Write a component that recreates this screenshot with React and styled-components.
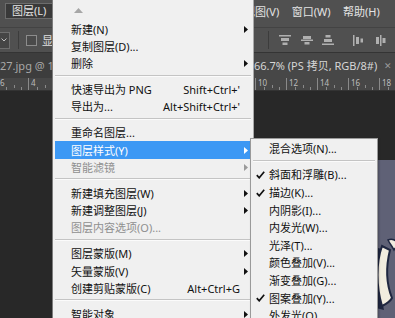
import React from 'react';
import styled, { createGlobalStyle } from 'styled-components';

const FONT = `"Noto Sans", "Noto Sans CJK SC", sans-serif`;

const Global = createGlobalStyle`
  html, body { margin: 0; padding: 0; background: #282828; }
  body { width: 395px; height: 318px; overflow: hidden; font-family: ${FONT}; }
  * { box-sizing: border-box; }
`;

const Screen = styled.div`
  position: relative;
  width: 395px;
  height: 318px;
  overflow: hidden;
  display: flex;
  flex-direction: column;
  background: #282828;
  font-family: ${FONT};
`;

/* width of the window strip left of the open menu */
const LEFT_STRIP = 52;

/* ---------- top menu bar ---------- */
const MenuBar = styled.div`
  flex: none;
  height: 27px;
  display: flex;
  align-items: flex-start;
  padding: 3px 0 0 5px;
  background: #505050;
  color: #e4e4e4;
  font-size: 11px;
`;
const BarButton = styled.div`
  width: 47px;
  height: 16px;
  padding: 0 6px;
  line-height: 14px;
  background: #393939;
  border: 1px solid #6c6c6c;
  border-right: none;
  white-space: nowrap;
  overflow: hidden;
`;
const BarGroup = styled.div`
  display: flex;
  gap: 12.5px;
  margin-left: ${p => p.$offset}px;
`;
const BarItem = styled.span`
  line-height: 18px;
  white-space: nowrap;
`;

/* ---------- options bar ---------- */
const OptionsBar = styled.div`
  flex: none;
  height: 25px;
  display: flex;
  align-items: center;
  background: #505050;
  border-top: 1px solid #434343;
`;
const LeftTools = styled.div`
  width: ${LEFT_STRIP}px;
  flex: none;
  display: flex;
  align-items: center;
  overflow: hidden;
`;
const DropBox = styled.div`
  width: 40px;
  height: 17px;
  margin-left: -30px;
  flex: none;
  border: 1px solid #6e6e6e;
  background: #454545;
  display: flex;
  align-items: center;
  justify-content: flex-end;
  padding-right: 2px;
`;
const VSep = styled.div`
  width: 1px;
  height: 18px;
  flex: none;
  background: #3c3c3c;
  margin-left: ${p => p.$ml}px;
`;
const CheckBox = styled.div`
  width: 11px;
  height: 11px;
  border: 1px solid #8c8c8c;
  background: #4a4a4a;
  margin-left: 7px;
  flex: none;
`;
const OptLabel = styled.span`
  margin-left: 5px;
  color: #e0e0e0;
  font-size: 11px;
  line-height: 15px;
  white-space: nowrap;
`;
const RightTools = styled.div`
  display: flex;
  align-items: center;
`;
const ToolIcon = styled.svg`
  flex: none;
  margin-left: ${p => p.$ml}px;
`;

/* ---------- tab bar ---------- */
const TabBar = styled.div`
  flex: none;
  height: 26px;
  display: flex;
  background: #3d3d3d;
  border-top: 1px solid #343434;
`;
const Tab = styled.div`
  flex: none;
  width: ${p => (p.$w ? `${p.$w}px` : 'auto')};
  margin-left: ${p => p.$ml || 0}px;
  display: flex;
  align-items: center;
  padding: 0 ${p => p.$pad || 0}px 0 0;
  background: ${p => (p.$active ? '#474747' : '#3d3d3d')};
  color: ${p => (p.$active ? '#d6d6d6' : '#a8a8a8')};
  font-size: 11px;
  line-height: 15px;
  white-space: nowrap;
  overflow: hidden;
`;
const TabClose = styled.span`
  margin-left: 7px;
  color: #9a9a9a;
  font-size: 9px;
`;

/* ---------- ruler ---------- */
const Ruler = styled.div`
  flex: none;
  height: 13px;
  display: flex;
  background: #474747;
  border-bottom: 1px solid #333;
  overflow: hidden;
`;
const RulerGroup = styled.div`
  display: flex;
  flex: none;
  width: ${p => (p.$w ? `${p.$w}px` : 'auto')};
  overflow: hidden;
  margin-left: ${p => p.$ml}px;
`;
const RulerCell = styled.div`
  flex: none;
  width: ${p => p.$w}px;
  height: 12px;
  border-left: 1px solid #8a8a8a;
  padding-left: 2px;
  font-size: 8px;
  line-height: 10px;
  color: #bdbdbd;
  background-image: linear-gradient(#8a8a8a, #8a8a8a), linear-gradient(#8a8a8a, #8a8a8a),
    linear-gradient(#8a8a8a, #8a8a8a);
  background-size: 1px 3px;
  background-repeat: no-repeat;
  background-position: ${p => p.$w * 0.25}px 9px, ${p => p.$w * 0.5}px 7px, ${p => p.$w * 0.75}px 9px;
`;

/* ---------- canvas ---------- */
const Canvas = styled.div`
  flex: 1;
  display: flex;
  padding: 69px 0 0 300px;
  background: #282828;
`;
const Artboard = styled.div`
  flex: 1;
  position: relative;
  background: #5f6176;
  overflow: hidden;
`;
const Art = styled.svg`
  position: absolute;
  left: 70px;
  top: 78px;
`;

/* ---------- menus ---------- */
const LayerMenu = styled.div`
  position: absolute;
  top: 0;
  left: 52px;
  width: 202px;
  background: #f0f0f0;
  border-left: 1px solid #7c7c7c;
  border-right: 1px solid #a9a9a9;
  padding: 0 2px;
  font-size: 11px;
  line-height: 15px;
  color: #111;
`;
const ScrollUp = styled.div`
  height: 20.4px;
  padding: 8px 0 0 19px;
  line-height: 0;
`;
const Row = styled.div`
  height: 17.25px;
  display: grid;
  grid-template-columns: 1fr auto 11px;
  align-items: center;
  padding-left: 16px;
  white-space: nowrap;
  background: ${p => (p.$hl ? '#3c98f4' : 'transparent')};
  color: ${p => (p.$hl ? '#ffffff' : p.$off ? '#8f8f8f' : '#111111')};
`;
const Shortcut = styled.span`
  text-align: right;
`;
const ArrowCell = styled.span`
  display: flex;
  align-items: center;
  padding-left: 4px;
  height: 100%;
`;
const Sep = styled.div`
  height: ${p => p.$h}px;
  padding-top: ${p => p.$top}px;
  &::before {
    content: '';
    display: block;
    height: 1px;
    background: #c4c4c4;
    box-shadow: 0 1px 0 #fbfbfb;
  }
`;

const StyleMenu = styled.div`
  position: absolute;
  top: 138px;
  left: 250px;
  width: 128px;
  height: 200px;
  background: #f0f0f0;
  border: 1px solid #9a9a9a;
  padding: 1.2px 2px 0;
  font-size: 11px;
  line-height: 15px;
  color: #111;
  box-shadow: 1px 1px 2px rgba(0, 0, 0, 0.25);
`;
const SubRow = styled.div`
  height: 17.6px;
  display: grid;
  grid-template-columns: 16px 1fr;
  align-items: center;
  white-space: nowrap;
`;
const CheckCell = styled.span`
  display: flex;
  align-items: center;
  padding-left: 3px;
`;

const Arrow = ({ color }) => (
  <svg width="4" height="7" viewBox="0 0 4 7">
    <polygon points="0,0 4,3.5 0,7" fill={color} />
  </svg>
);

const Check = () => (
  <svg width="9" height="8" viewBox="0 0 9 8">
    <path d="M0.8 4.2 L3.2 6.8 L8.2 0.8" fill="none" stroke="#111" strokeWidth="1.7" />
  </svg>
);

const layerItems = [
  { t: '新建(N)', a: true },
  { t: '复制图层(D)...' },
  { t: '删除', a: true },
  'sep',
  { t: '快速导出为 PNG', k: "Shift+Ctrl+'" },
  { t: '导出为...', k: "Alt+Shift+Ctrl+'" },
  'sep',
  { t: '重命名图层...' },
  { t: '图层样式(Y)', a: true, hl: true },
  { t: '智能滤镜', a: true, off: true },
  'sep',
  { t: '新建填充图层(W)', a: true },
  { t: '新建调整图层(J)', a: true },
  { t: '图层内容选项(O)...', off: true },
  'sep',
  { t: '图层蒙版(M)', a: true },
  { t: '矢量蒙版(V)', a: true },
  { t: '创建剪贴蒙版(C)', k: 'Alt+Ctrl+G' },
  'sep',
  { t: '智能对象', a: true },
];

const styleItems = [
  { t: '混合选项(N)...' },
  'sep',
  { t: '斜面和浮雕(B)...', c: true },
  { t: '描边(K)...', c: true },
  { t: '内阴影(I)...' },
  { t: '内发光(W)...' },
  { t: '光泽(T)...' },
  { t: '颜色叠加(V)...' },
  { t: '渐变叠加(G)...' },
  { t: '图案叠加(Y)...', c: true },
  { t: '外发光(O)...' },
  { t: '投影(D)...' },
];

const IconTop = () => (
  <g fill="#b0b0b0">
    <rect x="0" y="0" width="12" height="1.5" />
    <rect x="2" y="3" width="8" height="3" />
    <rect x="3.5" y="7.5" width="5" height="2.5" />
  </g>
);
const IconMid = () => (
  <g fill="#b0b0b0">
    <rect x="2" y="1" width="8" height="3" />
    <rect x="0" y="4.5" width="12" height="1.5" />
    <rect x="3.5" y="7" width="5" height="2.5" />
  </g>
);
const IconBottom = () => (
  <g fill="#b0b0b0">
    <rect x="3.5" y="0" width="5" height="2.5" />
    <rect x="2" y="4" width="8" height="3" />
    <rect x="0" y="8.5" width="12" height="1.5" />
  </g>
);
const IconLeft = () => (
  <g fill="#b0b0b0">
    <rect x="0" y="0" width="1.5" height="11" />
    <rect x="3" y="2" width="3" height="7" />
    <rect x="7.5" y="3.5" width="2.5" height="4" />
  </g>
);
const IconHCenter = () => (
  <g fill="#b0b0b0">
    <rect x="1" y="2" width="3" height="7" />
    <rect x="5" y="0" width="1.5" height="11" />
    <rect x="7.5" y="3" width="3" height="5" />
  </g>
);

export default function App() {
  return (
    <Screen>
      <Global />
      <MenuBar>
        <BarButton>图层(L)</BarButton>
        <BarGroup $offset={192}>
          <BarItem>视图(V)</BarItem>
          <BarItem>窗口(W)</BarItem>
          <BarItem>帮助(H)</BarItem>
        </BarGroup>
      </MenuBar>

      <OptionsBar>
        <LeftTools>
          <DropBox>
            <svg width="6" height="4" viewBox="0 0 6 4">
              <path d="M0.5 0.5 L3 3 L5.5 0.5" fill="none" stroke="#c0c0c0" strokeWidth="1" />
            </svg>
          </DropBox>
          <VSep $ml={8} />
          <CheckBox />
          <OptLabel>显示</OptLabel>
        </LeftTools>
        <VSep $ml={216} />
        <RightTools>
          <ToolIcon $ml={10} width="12" height="11" viewBox="0 0 12 11"><IconTop /></ToolIcon>
          <ToolIcon $ml={10} width="12" height="11" viewBox="0 0 12 11"><IconMid /></ToolIcon>
          <ToolIcon $ml={9} width="12" height="11" viewBox="0 0 12 11"><IconBottom /></ToolIcon>
          <ToolIcon $ml={19} width="11" height="11" viewBox="0 0 11 11"><IconLeft /></ToolIcon>
          <ToolIcon $ml={11} width="11" height="11" viewBox="0 0 11 11"><IconHCenter /></ToolIcon>
        </RightTools>
      </OptionsBar>

      <TabBar>
        <Tab $w={LEFT_STRIP}>27.jpg @ 10</Tab>
        <Tab $active $ml={202} $pad={14}>
          66.7% (PS 拷贝, RGB/8#)
          <TabClose>✕</TabClose>
        </Tab>
      </TabBar>

      <Ruler>
        <RulerGroup $ml={0} $w={LEFT_STRIP}>
          <RulerGroup $ml={-3}>
            {['6', '4'].map((n, i) => (
              <RulerCell key={i} $w={31}>{n}</RulerCell>
            ))}
          </RulerGroup>
        </RulerGroup>
        <RulerGroup $ml={203}>
          {['10', '12', '14', '16', '18'].map((n, i) => (
            <RulerCell key={i} $w={31}>{n}</RulerCell>
          ))}
        </RulerGroup>
      </Ruler>

      <Canvas>
        <Artboard>
          <Art width="30" height="80" viewBox="0 0 30 80">
            <path d="M8 10 C2 25 0 45 6 70 L14 72 C9 50 10 28 16 12 Z" fill="#1f2640" />
            <path d="M12 8 C6 25 6 48 12 68 C16 66 20 64 22 60 C16 45 16 28 20 12 Z" fill="#f1ecdf" stroke="#1f2640" strokeWidth="2" />
            <path d="M18 2 C22 0 26 2 28 6 L24 12 C22 8 20 6 18 2 Z" fill="#f1ecdf" stroke="#1f2640" strokeWidth="1.5" />
          </Art>
        </Artboard>
      </Canvas>

      <LayerMenu>
        <ScrollUp>
          <svg width="9" height="5" viewBox="0 0 9 5">
            <polygon points="0,5 4.5,0 9,5" fill="#a6a6a6" />
          </svg>
        </ScrollUp>
        {layerItems.map((it, i) =>
          it === 'sep' ? (
            <Sep key={i} $h={8.75} $top={2.4} />
          ) : (
            <Row key={i} $hl={it.hl} $off={it.off}>
              <span>{it.t}</span>
              <Shortcut>{it.k || ''}</Shortcut>
              <ArrowCell>
                {it.a && <Arrow color={it.hl ? '#ffffff' : it.off ? '#9a9a9a' : '#111111'} />}
              </ArrowCell>
            </Row>
          )
        )}
      </LayerMenu>

      <StyleMenu>
        {styleItems.map((it, i) =>
          it === 'sep' ? (
            <Sep key={i} $h={8.4} $top={2.6} />
          ) : (
            <SubRow key={i}>
              <CheckCell>{it.c && <Check />}</CheckCell>
              <span>{it.t}</span>
            </SubRow>
          )
        )}
      </StyleMenu>
    </Screen>
  );
}
